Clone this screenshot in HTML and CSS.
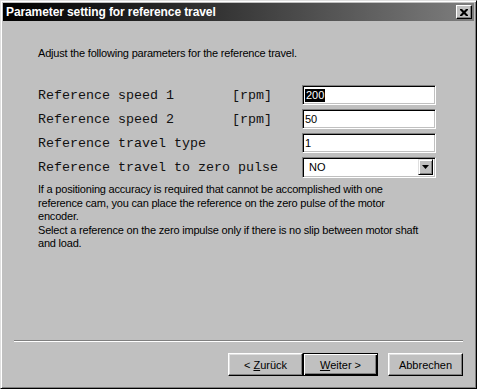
FILE: index.html
```html
<!DOCTYPE html>
<html lang="en">
<head>
    <meta charset="UTF-8">
    <title>Parameter setting for reference travel</title>
    <link rel="stylesheet" href="styles.css">
</head>
<body>
    <div class="window">
        <div class="titlebar">
            <span class="title">Parameter setting for reference travel</span>
            <span class="close">
                <svg width="8" height="7" viewBox="0 0 8 7">
                    <path d="M0 0h2l2 2 2-2h2v1l-2.5 2.5 2.5 2.5v1h-2l-2-2-2 2h-2v-1l2.5-2.5-2.5-2.5z" fill="#000"/>
                </svg>
            </span>
        </div>

        <div class="main">
            <p class="intro">Adjust the following parameters for the reference travel.</p>

            <!-- Parameter -->
            <div class="params">
                <span class="label">Reference speed 1</span>
                <span class="unit">[rpm]</span>
                <span class="field"><span class="selected">200</span></span>

                <span class="label">Reference speed 2</span>
                <span class="unit">[rpm]</span>
                <span class="field">50</span>

                <span class="label">Reference travel type</span>
                <span class="unit"></span>
                <span class="field">1</span>

                <span class="label">Reference travel to zero pulse</span>
                <span class="unit"></span>
                <span class="field combo">
                    <span class="combo-text">NO</span>
                    <span class="combo-btn">
                        <svg width="7" height="4" viewBox="0 0 7 4"><path d="M0 0h7l-3.5 4z" fill="#000"/></svg>
                    </span>
                </span>
            </div>

            <p class="note">If a positioning accuracy is required that cannot be accomplished with one<br>reference cam, you can place the reference on the zero pulse of the motor<br>encoder.</p>
            <p class="note">Select a reference on the zero impulse only if there is no slip between motor shaft<br>and load.</p>
        </div>

        <div class="footer">
            <div class="separator"></div>
            <div class="buttons">
                <button class="btn">&lt; <u>Z</u>urück</button>
                <button class="btn default"><u>W</u>eiter &gt;</button>
                <button class="btn cancel">Abbrechen</button>
            </div>
        </div>
    </div>
</body>
</html>
```

FILE: styles.css
```css
* {
    margin: 0;
    padding: 0;
    box-sizing: border-box;
}

body {
    font-family: "Liberation Sans", Arial, sans-serif;
    font-size: 11px;
    background: #c0c0c0;
}

.window {
    width: 477px;
    height: 389px;
    display: flex;
    flex-direction: column;
    padding: 2px;
    background: #c0c0c0;
    border: 1px solid;
    border-color: #dfdfdf #000 #000 #dfdfdf;
    box-shadow: inset 1px 1px #fff, inset -1px -1px #808080;
}

.titlebar {
    height: 18px;
    display: flex;
    align-items: center;
    justify-content: space-between;
    padding: 0 2px 0 3px;
    background: linear-gradient(to right, #000 0%, #333 45%, #7e7e7e 100%);
}

.title {
    color: #fff;
    font-family: "Liberation Sans", Arial, sans-serif;
    font-weight: bold;
    font-size: 12px;
    letter-spacing: -0.1px;
}

.close {
    width: 16px;
    height: 14px;
    display: flex;
    align-items: center;
    justify-content: center;
    background: #c0c0c0;
    border: 1px solid;
    border-color: #fff #000 #000 #fff;
    box-shadow: inset -1px -1px #808080;
}

.main {
    flex: 1;
    padding-left: 35px;
    letter-spacing: -0.2px;
}

.intro {
    margin-top: 26px;
    line-height: 13px;
    color: #000;
}

.params {
    margin-top: 25px;
    display: grid;
    grid-template-columns: 194px 70px 134px;
    grid-auto-rows: 20px;
    row-gap: 4px;
    align-items: center;
    font-family: "Liberation Mono", "Courier New", monospace;
    font-size: 13.33px;
    letter-spacing: 0;
    color: #111;
}

.label, .unit {
    white-space: nowrap;
}

.field {
    height: 20px;
    display: flex;
    align-items: center;
    padding-left: 2px;
    background: #fff;
    color: #000;
    border: 1px solid;
    border-color: #808080 #fff #fff #808080;
    box-shadow: inset 1px 1px #000, inset -1px -1px #c0c0c0;
    font-family: "Liberation Sans", Arial, sans-serif;
    font-size: 11px;
}

.selected {
    background: #000;
    color: #fff;
    padding: 0 1px;
    line-height: 13px;
}

.combo {
    height: 21px;
    justify-content: space-between;
    padding: 0 2px 0 6px;
}

.combo-btn {
    width: 15px;
    height: 16px;
    display: flex;
    align-items: center;
    justify-content: center;
    background: #c0c0c0;
    border: 1px solid;
    border-color: #dfdfdf #000 #000 #dfdfdf;
    box-shadow: inset 1px 1px #fff, inset -1px -1px #808080;
}

.note {
    line-height: 13.5px;
}

.params + .note {
    margin-top: 6px;
}

.footer {
    padding: 0 11px 10px;
}

.separator {
    height: 2px;
    border-top: 1px solid #808080;
    border-bottom: 1px solid #fff;
}

.buttons {
    margin-top: 11px;
    display: flex;
    justify-content: flex-end;
}

.btn {
    width: 75px;
    height: 23px;
    font-family: "Liberation Sans", Arial, sans-serif;
    font-size: 11px;
    color: #000;
    background: #c0c0c0;
    border: 1px solid;
    border-color: #fff #000 #000 #fff;
    box-shadow: inset -1px -1px #808080, inset 1px 1px #dfdfdf;
}

.btn.default {
    border: 1px solid #000;
    box-shadow: inset 1px 1px #fff, inset -1px -1px #000, inset -2px -2px #808080;
}

.btn.cancel {
    margin-left: 10px;
}
```
